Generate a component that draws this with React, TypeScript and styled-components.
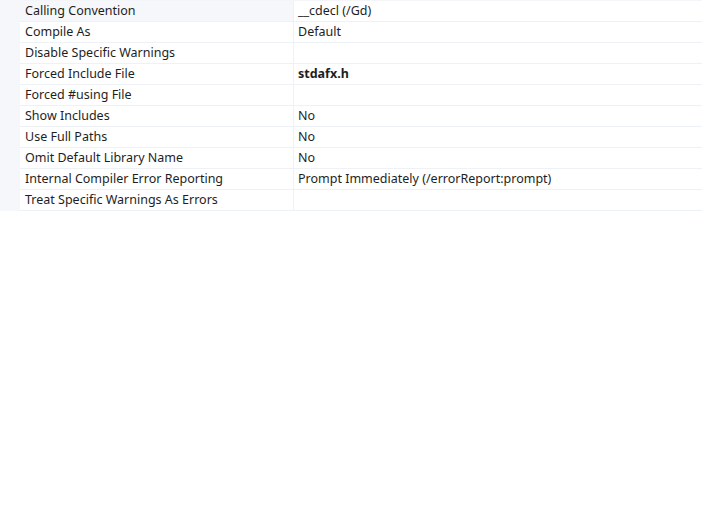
import React from 'react';
import styled, { createGlobalStyle } from 'styled-components';

const GlobalStyle = createGlobalStyle`
  html, body {
    margin: 0;
    padding: 0;
    background: #ffffff;
  }
  body {
    font-family: "Noto Sans", "Liberation Sans", sans-serif;
    font-size: 12.5px;
    color: #1e1e1e;
  }
`;

const Grid = styled.div`
  display: flex;
  align-items: stretch;
`;

const Gutter = styled.div`
  width: 20px;
  flex: none;
  background: #f5f7fb;
`;

const Table = styled.div`
  flex: 1;
  display: flex;
  flex-direction: column;
  border-top: 1px solid #f3f5f9;
`;

const Row = styled.div<{ selected?: boolean }>`
  display: grid;
  grid-template-columns: 274px 1fr;
  height: 21px;
  box-sizing: border-box;
  border-bottom: 1px solid #eef1f6;
  background: ${p => (p.selected ? '#f5f7fb' : '#ffffff')};
`;

const NameCell = styled.div`
  padding-left: 5px;
  line-height: 20px;
  white-space: nowrap;
  overflow: hidden;
  border-right: 1px solid #eef1f6;
`;

const ValueCell = styled.div<{ bold?: boolean }>`
  padding-left: 4px;
  line-height: 20px;
  white-space: nowrap;
  background: #ffffff;
  font-weight: ${p => (p.bold ? 700 : 400)};
`;

interface Property {
  name: string;
  value: string;
  bold?: boolean;
}

const properties: Property[] = [
  { name: 'Calling Convention', value: '__cdecl (/Gd)' },
  { name: 'Compile As', value: 'Default' },
  { name: 'Disable Specific Warnings', value: '' },
  { name: 'Forced Include File', value: 'stdafx.h', bold: true },
  { name: 'Forced #using File', value: '' },
  { name: 'Show Includes', value: 'No' },
  { name: 'Use Full Paths', value: 'No' },
  { name: 'Omit Default Library Name', value: 'No' },
  { name: 'Internal Compiler Error Reporting', value: 'Prompt Immediately (/errorReport:prompt)' },
  { name: 'Treat Specific Warnings As Errors', value: '' },
];

const App: React.FC = () => {
  return (
    <>
      <GlobalStyle />
      <Grid>
        <Gutter />
        <Table>
          {properties.map((p, i) => (
            <Row key={p.name} selected={i === 0}>
              <NameCell>{p.name}</NameCell>
              <ValueCell bold={p.bold}>{p.value}</ValueCell>
            </Row>
          ))}
        </Table>
      </Grid>
    </>
  );
};

export default App;
